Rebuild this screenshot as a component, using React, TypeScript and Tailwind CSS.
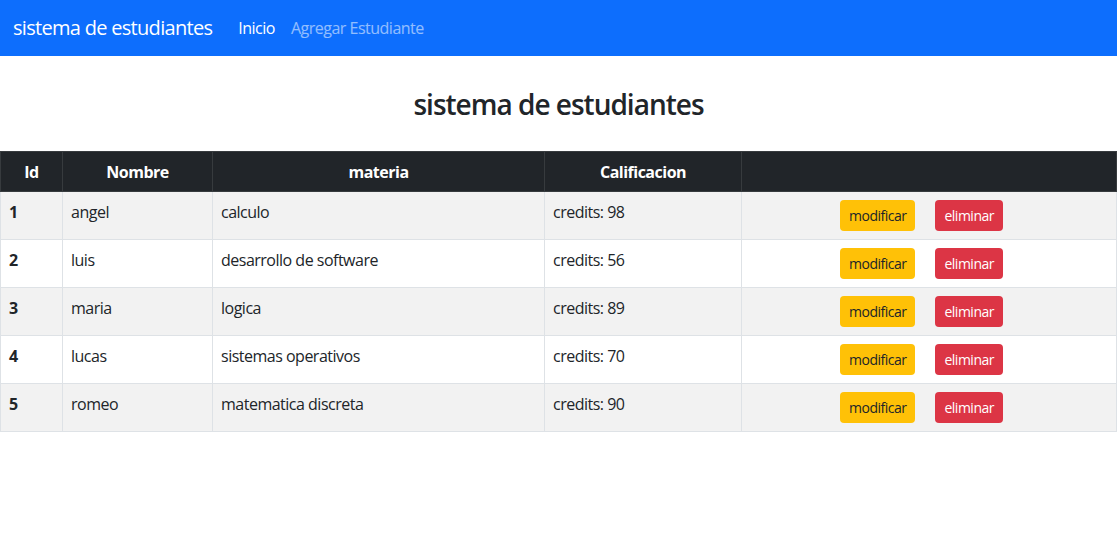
import React from "react";

type Estudiante = {
  id: number;
  nombre: string;
  materia: string;
  calificacion: number;
};

const estudiantes: Estudiante[] = [
  { id: 1, nombre: "angel", materia: "calculo", calificacion: 98 },
  { id: 2, nombre: "luis", materia: "desarrollo de software", calificacion: 56 },
  { id: 3, nombre: "maria", materia: "logica", calificacion: 89 },
  { id: 4, nombre: "lucas", materia: "sistemas operativos", calificacion: 70 },
  { id: 5, nombre: "romeo", materia: "matematica discreta", calificacion: 90 },
];

const Navbar = () => (
  <nav className="h-14 bg-[#0d6efd] flex items-center px-[13px]">
    <span className="text-white text-[20px] leading-[30px] tracking-[-0.7px] mr-[18px]">
      sistema de estudiantes
    </span>
    <a className="text-white text-base px-2">Inicio</a>
    <a className="text-white/55 text-base px-2">Agregar Estudiante</a>
  </nav>
);

const App = () => {
  return (
    <div
      className="min-h-screen bg-white text-[#212529] tracking-[-0.5px]"
      style={{ fontFamily: '"Open Sans", "Noto Sans", sans-serif' }}
    >
      <Navbar />
      <h2 className="text-center text-[28px] leading-[34px] font-semibold tracking-[-1px] mt-[31px] mb-[30px]">
        sistema de estudiantes
      </h2>
      <table className="w-full border-collapse text-base">
        <thead>
          <tr className="bg-[#212529] text-white">
            <th className="w-[62px] border border-[#373b3e] py-[7.5px] px-2 leading-6 font-bold">Id</th>
            <th className="w-[150px] border border-[#373b3e] py-[7.5px] px-2 leading-6 font-bold">Nombre</th>
            <th className="w-[332px] border border-[#373b3e] py-[7.5px] px-2 leading-6 font-bold">materia</th>
            <th className="w-[197px] border border-[#373b3e] py-[7.5px] px-2 leading-6 font-bold">Calificacion</th>
            <th className="border border-[#373b3e] py-[7.5px] px-2 leading-6"></th>
          </tr>
        </thead>
        <tbody>
          {estudiantes.map((e, i) => (
            <tr key={e.id} className={i % 2 === 0 ? "bg-[#f2f2f2]" : "bg-white"}>
              <th className="border border-[#dee2e6] px-2 pt-2 pb-2 align-top text-left font-bold leading-6">
                {e.id}
              </th>
              <td className="border border-[#dee2e6] px-2 pt-2 align-top leading-6">{e.nombre}</td>
              <td className="border border-[#dee2e6] px-2 pt-2 align-top leading-6">{e.materia}</td>
              <td className="border border-[#dee2e6] px-2 pt-2 align-top leading-6">
                credits: {e.calificacion}
              </td>
              <td className="border border-[#dee2e6] px-2 py-2 align-top">
                <div className="flex justify-center pr-[15px]">
                  <button className="h-[31px] px-[9px] rounded bg-[#ffc107] text-[#212529] text-sm leading-[21px] mr-5">
                    modificar
                  </button>
                  <button className="h-[31px] px-[9px] rounded bg-[#dc3545] text-white text-sm leading-[21px]">
                    eliminar
                  </button>
                </div>
              </td>
            </tr>
          ))}
        </tbody>
      </table>
    </div>
  );
};

export default App;
